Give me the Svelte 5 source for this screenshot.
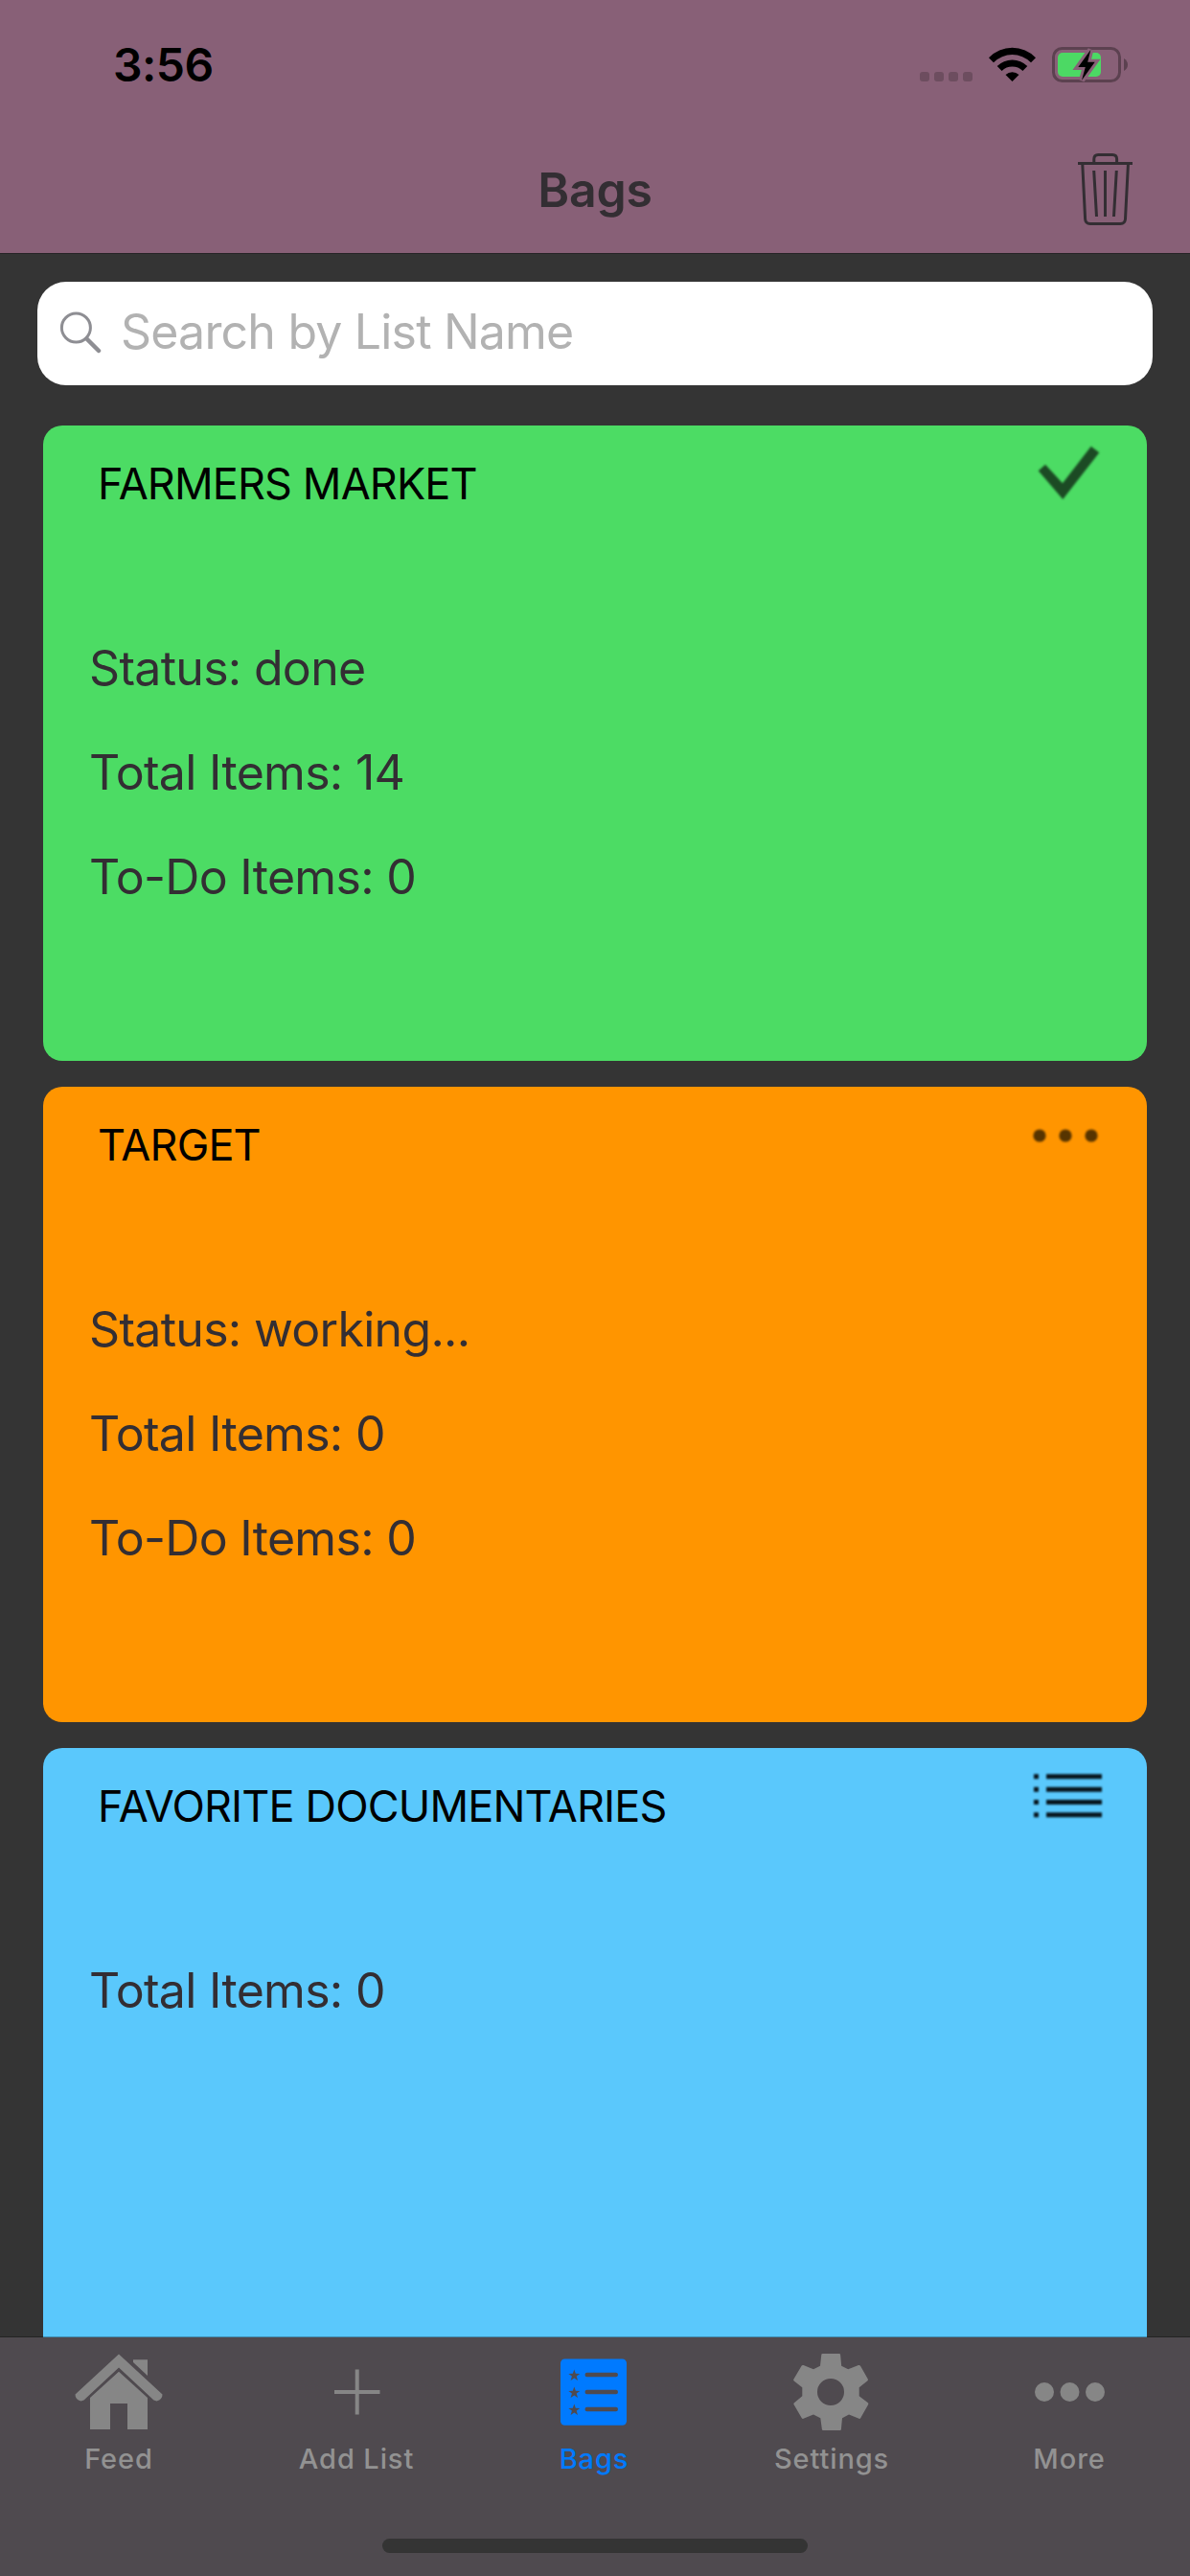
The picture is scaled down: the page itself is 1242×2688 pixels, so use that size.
<script>
    const lists = [
        { name: 'FARMERS MARKET', kind: 'done', rows: ['Status: done', 'Total Items: 14', 'To-Do Items: 0'] },
        { name: 'TARGET', kind: 'working', rows: ['Status: working...', 'Total Items: 0', 'To-Do Items: 0'] },
        { name: 'FAVORITE DOCUMENTARIES', kind: 'list', rows: ['Total Items: 0'] }
    ];

    const tabs = ['Feed', 'Add List', 'Bags', 'Settings', 'More'];
    const star = 'M0 -6.3 1.5 -2 6 -1.9 2.4 .8 3.7 5.1 0 2.6 -3.7 5.1 -2.4 .8 -6 -1.9 -1.5 -2Z';

    let active = 'Bags';
    let search = '';

    $: visible = lists.filter((l) => l.name.includes(search.toUpperCase()));
</script>

<div class="app">
    <header>
        <div class="status-bar">
            <span class="time">3:56</span>
            <div class="status-icons">
                <svg class="signal" width="55" height="10" viewBox="0 0 55 10">
                    {#each [0, 15, 30, 45] as x}
                        <rect {x} width="10" height="10" rx="3" fill="#6d4d5f" />
                    {/each}
                </svg>
                <svg class="wifi" width="49" height="37" viewBox="0 0 49 37">
                    <path d="M0 11.2A34 34 0 0 1 49 11.2L44 16.2A27.5 27.5 0 0 0 5 16.2Z" />
                    <path d="M8.7 20A22.5 22.5 0 0 1 40.3 20L35.4 25A15.6 15.6 0 0 0 13.6 25Z" />
                    <path d="M17.5 29A10.3 10.3 0 0 1 31.5 29L24.5 36Z" />
                </svg>
                <svg width="79" height="39" viewBox="0 0 79 39">
                    <rect x="1.5" y="2.5" width="69" height="34" rx="9" fill="none" stroke="#5c4150" stroke-width="3" />
                    <path d="M75 13q4 2.5 4 6.5t-4 6.5Z" fill="#5c4150" />
                    <rect x="6" y="7" width="45" height="25" rx="5" fill="#4cd964" />
                    <path d="M40.3 4 27.3 22h7.5L31 35.7 44.7 16.7h-7.5Z" stroke="#886077" stroke-width="6" stroke-miterlimit="3" />
                    <path d="M40.3 4 27.3 22h7.5L31 35.7 44.7 16.7h-7.5Z" />
                </svg>
            </div>
        </div>
        <div class="nav-bar">
            <h1>Bags</h1>
            <button class="trash" aria-label="Delete">
                <svg width="57" height="75" viewBox="0 0 57 75" fill="none" stroke="#332e33" stroke-width="3">
                    <path d="M0 10.5H57M16.8 10V6q0-4.5 4.5-4.5h14.8q4.5 0 4.5 4.5v4" />
                    <path d="M4.8 12 7.6 68.5q.3 5 5.2 5h31.5q4.9 0 5.2-5L52.4 12" />
                    <path d="M16.7 18 19.5 66M28.5 18V66M40.3 18 37.5 66" />
                </svg>
            </button>
        </div>
    </header>

    <main>
        <label class="search">
            <svg width="44" height="44" viewBox="0 0 44 44" fill="none" stroke="#8e8e93">
                <circle cx="17.4" cy="17" r="15" stroke-width="3" />
                <path d="M28.5 28.5 41 41" stroke-width="4.5" stroke-linecap="round" />
            </svg>
            <input bind:value={search} placeholder="Search by List Name" />
        </label>

        {#each visible as list}
            <section class="card {list.kind}">
                <div class="card-head">
                    <h2>{list.name}</h2>
                    <svg width="80" height="60" viewBox="0 0 80 60">
                        {#if list.kind === 'done'}
                            <path d="M8.7 27.3 16 20.7 34 40.3 63.7 1.7 72.3 8.3 34.3 57Z" fill="#1c4a24" />
                        {:else if list.kind === 'working'}
                            {#each [10, 37, 64] as cx}
                                <circle {cx} cy="31" r="6.6" fill="#573400" />
                            {/each}
                        {:else}
                            {#each [9.7, 23.2, 36.4, 49.8] as y}
                                <path d="M4 {y}h5M17 {y}h58" stroke="#07151d" stroke-width="5" />
                            {/each}
                        {/if}
                    </svg>
                </div>
                <div class="card-body">
                    {#each list.rows as row}
                        <p>{row}</p>
                    {/each}
                </div>
            </section>
        {/each}
    </main>

    <footer>
        <nav>
            {#each tabs as tab}
                <button class="tab" class:active={tab === active} on:click={() => (active = tab)}>
                    <svg width="96" height="84" viewBox="-48 -42 96 84" fill="currentColor">
                        {#if tab === 'Feed'}
                            <path d="M0 -39.5 45.5 2.5Q45.5 8 39.5 9.5L36.5 8.5 0 -25.5 -36.5 8.5 -39.5 9.5Q-45.5 8 -45.5 2.5Z" />
                            <path d="M0 -21.3 30 6V39H9V12H-9V39H-30V6Z" />
                            <path d="M15 -33.7H30V-17L15 -31Z" />
                        {:else if tab === 'Add List'}
                            <path d="M-23 -2H24.5V2H-23ZM-1.3 -23.5H2.7V23.5H-1.3Z" />
                        {:else if tab === 'Bags'}
                            <rect x="-35" y="-34.6" width="69" height="69.4" rx="4.5" />
                            {#each [-18, 0, 18] as y}
                                <path class="cut" d={star} transform="translate(-20.7 {y + 0.8})" />
                                <rect class="cut" x="-9.5" y={y - 2.2} width="34.5" height="4.4" rx="2.2" />
                            {/each}
                        {:else if tab === 'Settings'}
                            <path
                                fill-rule="evenodd"
                                d="M-10.7 -39Q-10.6 -40 -9.5 -40H8Q9 -40 9.1 -39L10.2 -27.3 17.2 -23.7 28 -28Q29.2 -28.3 30 -27.3L37.8 -13.5Q38.2 -12.5 37.5 -11.8L28.7 -4.7V4.2L37.9 11.3Q38.7 12 38.2 13L30.3 27Q29.5 28.3 28.5 27.8L18 23.5 11 27.3 9.9 39Q9.8 40 8.8 40H-9Q-10 40 -10.1 39L-11.7 27.3 -19 23.5 -29.5 27.8Q-30.5 28.2 -31.2 27.2L-39.5 13Q-40 12 -39.3 11.4L-30.7 4.2V-4.7L-39.3 -11.5Q-40.2 -12.2 -39.7 -13.2L-31.3 -27.4Q-30.6 -28.4 -29.5 -28L-19 -23.7 -12 -27.3ZM-15 0A14 14 0 1 0 13 0 14 14 0 1 0 -15 0Z"
                            />
                        {:else}
                            <circle cx="-26" cy="0" r="10" />
                            <circle cx=".5" cy="0" r="10" />
                            <circle cx="27" cy="0" r="10" />
                        {/if}
                    </svg>
                    <span>{tab}</span>
                </button>
            {/each}
        </nav>
        <div class="home-indicator"></div>
    </footer>
</div>

<style>
    :global(body) {
        margin: 0;
        background: #343434;
    }

    .app {
        width: 1242px;
        height: 2688px;
        display: flex;
        flex-direction: column;
        overflow: hidden;
        background: #343434;
        font-family: Inter, 'Liberation Sans', sans-serif;
        color: #332e33;
    }

    h1, h2, p {
        margin: 0;
        font-weight: 400;
    }

    button {
        padding: 0;
        border: 0;
        background: none;
        font-family: inherit;
    }

    svg {
        display: block;
        flex: none;
    }

    header {
        flex: none;
        height: 265px;
        box-sizing: border-box;
        background: #886077;
        border-bottom: 1px solid #272427;
    }

    .status-bar {
        height: 132px;
        padding: 0 65px 0 118px;
        display: flex;
        justify-content: space-between;
        align-items: center;
    }

    .time {
        font-size: 48px;
        font-weight: 600;
        letter-spacing: -0.5px;
        color: #000;
        line-height: 60px;
        margin-top: 4px;
    }

    .status-icons {
        display: flex;
        align-items: flex-end;
        gap: 17px;
        margin-top: 3px;
    }

    .signal {
        margin-bottom: 2px;
    }

    .wifi {
        margin-bottom: 1px;
    }

    .nav-bar {
        height: 131px;
        display: grid;
        grid-template-columns: 1fr auto 1fr;
        align-items: center;
        padding: 0 60px;
    }

    h1 {
        grid-column: 2;
        font-size: 50px;
        font-weight: 600;
        letter-spacing: -0.2px;
    }

    .trash {
        justify-self: end;
    }

    main {
        flex: 1;
        min-height: 0;
        overflow: hidden;
        display: flex;
        flex-direction: column;
        gap: 27px;
        padding: 29px 45px 0;
    }

    .search {
        flex: none;
        height: 108px;
        margin: 0 -6px 15px;
        padding: 0 23px 2px;
        box-sizing: border-box;
        display: flex;
        align-items: center;
        gap: 20px;
        border-radius: 30px;
        background: #fff;
    }

    .search input {
        flex: 1;
        padding: 0 0 2px;
        border: 0;
        outline: 0;
        background: none;
        font: 400 50px Inter, 'Liberation Sans', sans-serif;
        letter-spacing: -0.8px;
    }

    .search input::placeholder {
        color: #b2b2b2;
    }

    .card {
        flex: none;
        height: 663px;
        box-sizing: border-box;
        padding: 20px 42px 0 48px;
        border-radius: 20px;
    }

    .done {
        background: #4cdc64;
    }

    .working {
        background: #ff9500;
    }

    .list {
        background: #5ac8fc;
    }

    .card-head {
        display: flex;
        justify-content: space-between;
        height: 179px;
    }

    .card-head svg {
        filter: blur(0.8px);
    }

    h2 {
        padding: 13px 0 0 9px;
        font-size: 45px;
        line-height: 56px;
        letter-spacing: -0.85px;
        color: #000;
    }

    .card-body p {
        font-size: 50px;
        line-height: 109px;
        letter-spacing: -0.7px;
    }

    footer {
        position: relative;
        flex: none;
        height: 249px;
        box-sizing: border-box;
        display: flex;
        flex-direction: column;
        align-items: center;
        justify-content: space-between;
        padding: 15px 0 24px;
        box-shadow: 0 -1px rgba(0, 0, 0, 0.3);
        background: #4f4a4f;
    }

    nav {
        display: flex;
        width: 1242px;
    }

    .tab {
        width: 248px;
        display: flex;
        flex-direction: column;
        align-items: center;
        color: #868686;
    }

    .tab span {
        margin-top: 8px;
        font-size: 29px;
        font-weight: 500;
        line-height: 40px;
        letter-spacing: 0.9px;
        color: #929292;
    }

    .tab.active,
    .tab.active span {
        color: #007aff;
    }

    .cut {
        fill: #4f4a4f;
    }

    .home-indicator {
        width: 444px;
        height: 15px;
        border-radius: 8px;
        background: #343434;
    }
</style>
